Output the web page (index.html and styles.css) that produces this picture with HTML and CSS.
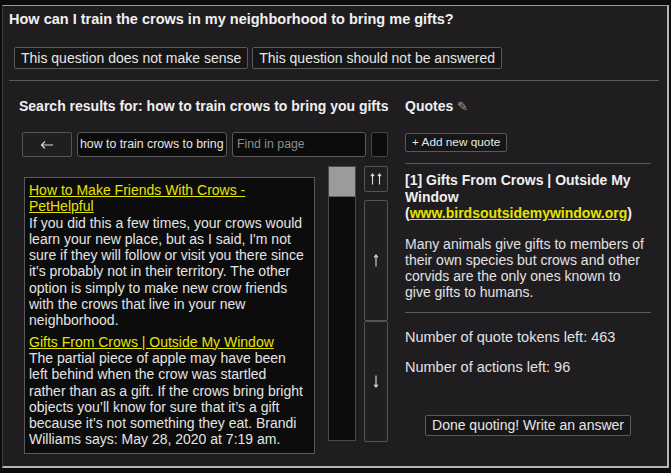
FILE: index.html
```html
<!DOCTYPE html>
<html>
<head>
<meta charset="utf-8">
<link rel="stylesheet" href="styles.css">
</head>
<body>
<div class="panel">
  <div class="title">How can I train the crows in my neighborhood to bring me gifts?</div>
  <div class="flags">
    <button class="btn">This question does not make sense</button>
    <button class="btn">This question should not be answered</button>
  </div>
  <div class="rule"></div>
  <div class="cols">
    <div class="left">
      <div class="heading">Search results for: how to train crows to bring you gifts</div>
      <div class="toolbar">
        <button class="back"><svg width="14" height="10" viewBox="0 0 14 10"><path d="M13 5H1.5M5 1.5L1.5 5L5 8.5" fill="none" stroke="#dcdcdc" stroke-width="1.1"/></svg></button>
        <div class="input query">how to train crows to bring you gifts</div>
        <div class="input find">Find in page</div>
        <div class="input tiny"></div>
      </div>
      <div class="browser">
        <div class="results">
          <div class="result">
            <a class="link">How to Make Friends With Crows - PetHelpful</a>
            <div>If you did this a few times, your crows would learn your new place, but as I said, I'm not sure if they will follow or visit you there since it's probably not in their territory. The other option is simply to make new crow friends with the crows that live in your new neighborhood.</div>
          </div>
          <div class="result">
            <a class="link">Gifts From Crows | Outside My Window</a>
            <div>The partial piece of apple may have been left behind when the crow was startled rather than as a gift. If the crows bring bright objects you’ll know for sure that it’s a gift because it’s not something they eat. Brandi Williams says: May 28, 2020 at 7:19 am.</div>
          </div>
        </div>
        <div class="scrollbar"><div class="thumb"></div></div>
        <div class="nav">
          <button class="navbtn top"><svg width="14" height="12" viewBox="0 0 14 12"><path d="M3.5 11.5V1M1.8 3.2L3.5 1L5.2 3.2M10.5 11.5V1M8.8 3.2L10.5 1L12.2 3.2" fill="none" stroke="#dcdcdc" stroke-width="1.1"/></svg></button>
          <button class="navbtn long"><svg width="8" height="13" viewBox="0 0 8 13"><path d="M4 12.5V1M2.2 3.3L4 1L5.8 3.3" fill="none" stroke="#dcdcdc" stroke-width="1.1"/></svg></button>
          <button class="navbtn long"><svg width="8" height="13" viewBox="0 0 8 13"><path d="M4 0.5V12M2.2 9.7L4 12L5.8 9.7" fill="none" stroke="#dcdcdc" stroke-width="1.1"/></svg></button>
        </div>
      </div>
    </div>
    <div class="right">
      <div class="heading">Quotes <span class="pencil">✎</span></div>
      <button class="btn small">+ Add new quote</button>
      <div class="rule short"></div>
      <div class="qtitle">[1] Gifts From Crows | Outside My Window (<a class="link">www.birdsoutsidemywindow.org</a>)</div>
      <div class="qtext">Many animals give gifts to members of their own species but crows and other corvids are the only ones known to give gifts to humans.</div>
      <div class="rule short"></div>
      <div class="stat first">Number of quote tokens left: 463</div>
      <div class="stat">Number of actions left: 96</div>
      <div class="done"><button class="btn">Done quoting! Write an answer</button></div>
    </div>
  </div>
</div>
</body>
</html>
```
FILE: styles.css
```css
* { box-sizing: border-box; }
html, body { margin: 0; padding: 0; }
body {
  background: #0c0c0c;
  width: 671px;
  height: 473px;
  overflow: hidden;
  font-family: "Liberation Sans", Arial, sans-serif;
  color: #e2e2e2;
}
.panel {
  margin: 5px 0 0 2px;
  width: 667px;
  height: 463px;
  background: #201d21;
  border-top: 1px solid #9a9a9a;
  border-left: 1px solid #3c3a3d;
  border-right: 2px solid #b5b5b5;
  border-bottom: 2px solid #b5b5b5;
  padding: 3px 6px 0 6px;
}
.title {
  font-weight: bold;
  font-size: 14.5px;
  line-height: 20px;
  color: #f0f0f0;
}
.flags {
  display: flex;
  gap: 4px;
  margin-top: 18px;
  padding-left: 5px;
}
.btn {
  font-family: "Liberation Sans", Arial, sans-serif;
  font-size: 14px;
  color: #e6e6e6;
  background: #161616;
  border: 1px solid #5a5a5a;
  border-radius: 2px;
  height: 22px;
  padding: 0 6px;
  line-height: 20px;
  margin: 0;
}
.rule {
  height: 1px;
  background: #5a5a5a;
  margin-top: 11px;
  width: 650px;
}
.cols {
  display: flex;
}
.left {
  width: 386px;
  margin-left: 10px;
}
.heading {
  font-weight: bold;
  font-size: 14px;
  line-height: 20px;
  margin-top: 15px;
  color: #efefef;
}
.pencil {
  font-weight: normal;
  color: #9a9a9a;
  font-size: 13px;
}
.toolbar {
  display: flex;
  gap: 5px;
  margin-top: 16px;
  padding-left: 3px;
  height: 25px;
}
.back {
  width: 50px;
  height: 25px;
  background: #1f1f1f;
  border: 1px solid #555;
  border-radius: 2px;
  padding: 0;
  margin: 0;
  display: flex;
  align-items: center;
  justify-content: center;
}
.input {
  height: 25px;
  background: #0c0c0c;
  border: 1px solid #5a5a5a;
  border-radius: 3px;
  font-size: 12.3px;
  line-height: 23px;
  padding: 0 2px;
  white-space: nowrap;
  overflow: hidden;
  color: #e6e6e6;
}
.query { width: 150px; }
.find { width: 134px; color: #8c8c8c; padding-left: 4px; }
.tiny { width: 17px; border-color: #444; border-radius: 2px; }
.browser {
  display: flex;
  margin-top: 9px;
  padding-left: 5px;
}
.results {
  width: 291px;
  height: 277px;
  margin-top: 11px;
  background: #0c0c0c;
  border: 1px solid #5a5a5a;
  padding: 4px 8px 0 4px;
  font-size: 14px;
  line-height: 16.3px;
  color: #e4e4e4;
  overflow: hidden;
}
.result { margin-bottom: 5px; }
.link {
  color: #e4e400;
  text-decoration: underline;
}
.scrollbar {
  width: 28px;
  height: 275px;
  margin-left: 13px;
  background: #0c0c0c;
  border: 1px solid #4a4a4a;
}
.thumb {
  height: 30px;
  background: #9b9b9b;
  border-bottom: 1px solid #666;
}
.nav {
  display: flex;
  flex-direction: column;
  margin-left: 8px;
  width: 24px;
}
.navbtn {
  width: 24px;
  background: #1f1f1f;
  border: 1px solid #555;
  border-radius: 2px;
  padding: 0;
  margin: 0;
  display: flex;
  align-items: center;
  justify-content: center;
}
.navbtn.top { height: 26px; margin-bottom: 8px; }
.navbtn.long { height: 121px; }
.right {
  width: 246px;
  margin-left: 0;
}
.btn.small {
  margin-top: 16px;
  height: 19px;
  font-size: 11.8px;
  line-height: 17px;
  padding: 0 6px;
}
.rule.short {
  width: 246px;
}
.qtitle {
  font-weight: bold;
  font-size: 14px;
  line-height: 16.5px;
  margin-top: 8px;
  color: #efefef;
}
.qtext {
  font-size: 14px;
  line-height: 16.3px;
  margin-top: 14px;
  color: #e2e2e2;
  margin-bottom: 2px;
  padding-right: 3px;
}
.stat {
  font-size: 14.5px;
  line-height: 16px;
  margin-top: 14px;
}
.stat.first { margin-top: 16px; }
.done {
  display: flex;
  justify-content: center;
  margin-top: 40px;
}
.done .btn { height: 21px; line-height: 19px; }
```
